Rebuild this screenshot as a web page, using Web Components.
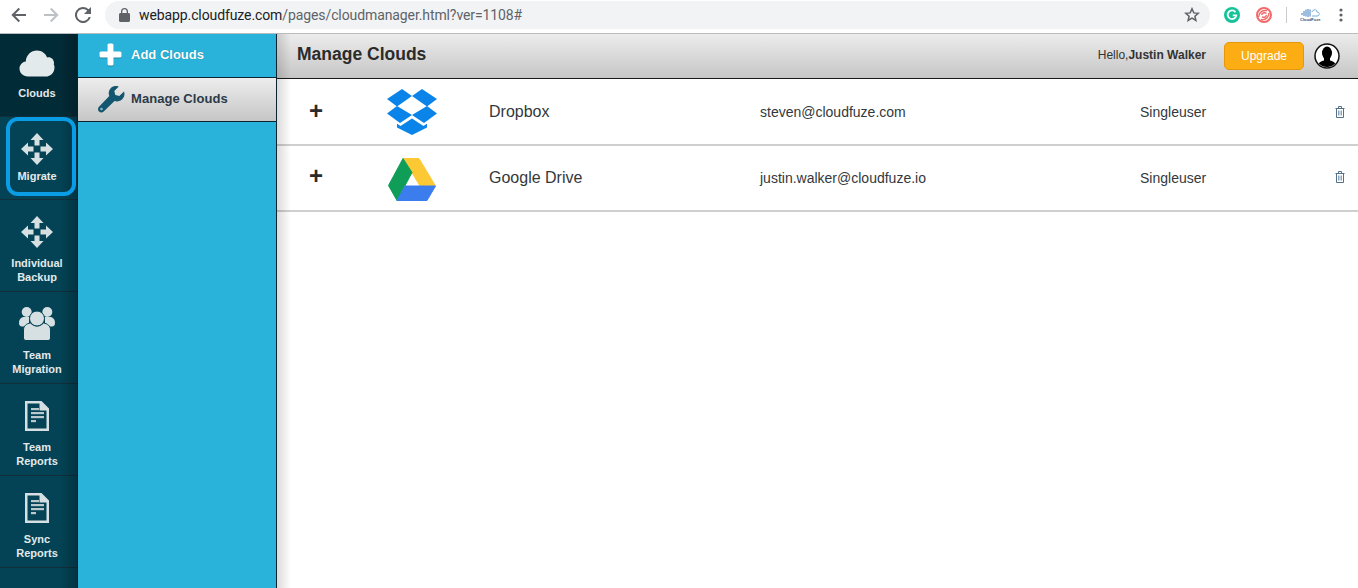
<!DOCTYPE html>
<html><head><meta charset="utf-8"><style>
html,body{margin:0;padding:0;height:100%;overflow:hidden;background:#fff;font-family:"Liberation Sans",Arial,sans-serif}
body{display:flex;flex-direction:column;height:588px}
</style></head><body>
<browser-bar url-host="webapp.cloudfuze.com" url-path="/pages/cloudmanager.html?ver=1108#"></browser-bar>
<app-frame>
  <side-nav slot="nav">
    <nav-item active h="83" pad="16" gap="8" icon="cloud">Clouds</nav-item>
    <nav-item h="83" pad="15" gap="3" icon="move" highlight>Migrate</nav-item>
    <nav-item h="92" pad="15" gap="7" icon="move">Individual<br>Backup</nav-item>
    <nav-item h="92" pad="15" gap="7" icon="team">Team<br>Migration</nav-item>
    <nav-item h="92" pad="17" gap="9" icon="doc">Team<br>Reports</nav-item>
    <nav-item h="92" pad="17" gap="9" icon="doc">Sync<br>Reports</nav-item>
  </side-nav>
  <sub-nav slot="sub">
    <sub-add>Add Clouds</sub-add>
    <sub-manage>Manage Clouds</sub-manage>
  </sub-nav>
  <manage-page slot="main">
    <page-header title="Manage Clouds" user="Justin Walker"></page-header>
    <cloud-row h="65" m="1" pb="0" pm="-1" lm="0" kind="dropbox" name="Dropbox" email="steven@cloudfuze.com" plan="Singleuser"></cloud-row>
    <cloud-row h="64" m="5" pb="2" pm="-3" lm="1" kind="drive" name="Google Drive" email="justin.walker@cloudfuze.io" plan="Singleuser"></cloud-row>
  </manage-page>
</app-frame>
<script>
const ICONS={
cloud:`<svg width="36" height="28" viewBox="0 0 36 28"><path fill="#e3eaec" d="M9 26.500C3.800 26.500 .5 23 .5 18.600c0-3.900 2.700-6.500 6.300-7.200C7.200 5.100 12 .5 18 .5c4.600 0 8.500 2.800 10.100 6.900 .7-.2 1-.2 1.400-.2 3 0 5.500 2.400 5.500 5.700 0 .7-.1 1-.2 1.500 .5 1 .7 1.700 .7 2.800 0 5.500-3.700 9.300-9 9.300z"/></svg>`,
move:`<svg width="34" height="34" viewBox="0 0 34 34"><g fill="#d6dfe2"><path d="M17 1l6.500 7h-4v5.500h-5V8h-4z"/><path d="M17 33l6.500-7h-4v-5.500h-5V26h-4z"/><path d="M1 17l7-6.500v4h5.500v5H8v4z"/><path d="M33 17l-7-6.500v4h-5.500v5H26v4z"/></g></svg>`,
team:`<svg width="36" height="34" viewBox="0 0 36 34"><g fill="#d6dfe2"><circle cx="7.700" cy="5" r="5"/><circle cx="28.300" cy="5" r="5"/><path d="M0 16c0-3.500 2-6 5-6h5v9.500H3c-2 0-3-1.500-3-3.500z"/><path d="M36 16c0-3.500-2-6-5-6h-5v9.500h7c2 0 3-1.500 3-3.500z"/><path stroke="#034355" stroke-width="1" d="M4.500 31V23c0-4 3-6.500 7-7 2 2 4 3 6.500 3s4.500-1 6.500-3c4 .5 7 3 7 7v8c0 1.500-1 2.500-2.500 2.500H7c-1.500 0-2.500-1-2.500-2.500z"/><circle cx="18" cy="11.500" r="7.500" stroke="#034355" stroke-width="1"/></g></svg>`,
doc:`<svg width="24" height="30" viewBox="0 0 24 30"><path fill="#d6dfe2" fill-rule="evenodd" d="M0 0h16.500L24 7.500V30H0zM2.500 2.500v25h19V9.500h-7v-7z"/><path fill="#d6dfe2" d="M16.500 2.500l5 5h-5z" opacity=".7"/><g fill="#b9c8cd"><rect x="6" y="7" width="8" height="2.200"/><rect x="6" y="11" width="13" height="2.200"/><rect x="6" y="15" width="13" height="2.200"/><rect x="6" y="19" width="5" height="2.200"/></g></svg>`,
dropbox:`<svg width="50" height="46" viewBox="0 0 50 46"><g fill="#0b84ea"><path d="M15 0L0 10l10 7.500L25 7z"/><path d="M35 0L50 10l-10 7.500L25 7z"/><path d="M0 24.500L13 34l12-8-15-9z"/><path d="M50 24.500L37 34l-12-8 15-9z"/><path d="M25 29.500l-11.500 7.500-3.500-2.200v3.700l15 7.500 15-7.500v-3.700l-3.500 2.200z"/></g></svg>`,
drive:`<svg width="48" height="43" viewBox="0 0 48 43"><g stroke-linejoin="round" stroke-width="1"><path fill="#fcc934" stroke="#fcc934" d="M15.500 .5h15.500L47.500 28H32z"/><path fill="#0f9d58" stroke="#0f9d58" d="M15 .5L.5 27.500 9 42.500 24 14.500z"/><path fill="#3b7ded" stroke="#3b7ded" d="M17 28h30.500L39 42.500H9z"/></g></svg>`};
function def(name,css,html,init){customElements.define(name,class extends HTMLElement{
  connectedCallback(){if(this.shadowRoot)return;const s=this.attachShadow({mode:'open'});
  const a=n=>this.getAttribute(n)||'';s.innerHTML=`<style>${css}</style>`+html(a,this);if(init)init(s,this)}})}
def('browser-bar',`:host{display:flex;align-items:center;height:33px;flex:none;background:#fff;border-bottom:1px solid #b9bcbe;position:relative}
svg{display:block;flex:none}
.nav{display:flex;align-items:center;gap:0;padding-left:11px;width:105px;box-sizing:border-box}
.nav svg:nth-child(1){margin-right:16px}.nav svg:nth-child(2){margin-right:16px}
.omni{flex:none;width:1105px;height:28px;margin-top:-4px;border-radius:14px;background:#f1f3f4;display:flex;align-items:center;box-sizing:border-box;padding-left:14px;font:14px/28px Roboto,"Liberation Sans",sans-serif;letter-spacing:-.1px}
.omni b{font-weight:400;color:#202124}.omni span{color:#5f6368}
.lock{margin-right:9px}
.star{margin-left:auto;margin-right:10px}
.ext{display:flex;align-items:center;margin-left:14px;margin-top:-4px}
.sep{width:1px;height:16px;background:#c9cbcd;margin:0 13px 0 14px}
.cf{font:bold 4px "Liberation Sans",sans-serif;color:#35506e;text-align:center;width:20px;line-height:4px}
.dots{margin-left:19px}`,(a)=>`
<div class="nav" style="margin-top:-4px">
<svg width="16" height="16" viewBox="0 0 16 16"><path fill="none" stroke="#5f6368" stroke-width="2" d="M15 8H2M8.300 1.500L1.800 8l6.500 6.500"/></svg>
<svg width="16" height="16" viewBox="0 0 16 16"><path fill="none" stroke="#bdc1c6" stroke-width="2" d="M1 8h13M7.700 1.500L14.200 8l-6.500 6.500"/></svg>
<svg width="16" height="16" viewBox="0 0 16 16"><path fill="#5f6368" d="M13.650 2.350A8 8 0 1 0 15.750 10h-2.100A6 6 0 1 1 8 2c1.650 0 3.150.7 4.200 1.800L9 7h7V0z"/></svg>
</div>
<div class="omni">
<svg class="lock" width="11" height="14" viewBox="0 0 11 14"><path fill="#5f6368" d="M9.500 5H9V3.500a3.500 3.500 0 0 0-7 0V5h-.5C.7 5 0 5.700 0 6.500v6C0 13.300.7 14 1.500 14h8c.8 0 1.500-.7 1.500-1.500v-6C11 5.700 10.300 5 9.500 5zM3.300 5V3.500a2.200 2.200 0 0 1 4.400 0V5z"/></svg>
<b>${a('url-host')}</b><span>${a('url-path')}</span>
<svg class="star" width="16" height="15" viewBox="0 0 16 15"><path fill="none" stroke="#5f6368" stroke-width="1.500" d="M8 1.800l1.800 4.100 4.400.4-3.300 2.900 1 4.300L8 11.200l-3.900 2.300 1-4.300L1.800 6.300l4.400-.4z"/></svg>
</div>
<div class="ext">
<svg width="16" height="16" viewBox="0 0 16 16"><circle cx="8" cy="8" r="8" fill="#15c39a"/><path fill="none" stroke="#fff" stroke-width="1.800" d="M11.500 5.200A4.300 4.300 0 1 0 12.300 8.300H8.800"/></svg>
<svg style="margin-left:16px" width="16" height="16" viewBox="0 0 16 16"><circle cx="8" cy="8" r="7" fill="none" stroke="#f26a6a" stroke-width="2"/><path fill="none" stroke="#f26a6a" stroke-width="1.500" d="M2.500 10C3 5 7 3 11 3.500M13 6C13 10 9.500 13.500 5 12.500M5.500 8C6 6 8.500 5 10.500 6.500M10.500 8C10 10 8 11 6 9.800"/></svg>
<div class="sep"></div>
<div class="cf"><svg width="20" height="10" viewBox="0 0 20 10" style="margin:0 auto"><g fill="none" stroke="#3e7fc1"><path d="M2 5v2M4 3v5M6 1.500v7M8 1v8M10 1.500v7"/><path d="M12 8h5c3 0 3-4 0-4 0-3-4-3-5 0" stroke="#6fb0de"/></g></svg>CloudFuze</div>
<svg class="dots" width="4" height="14" viewBox="0 0 4 14"><g fill="#5f6368"><circle cx="2" cy="2" r="1.600"/><circle cx="2" cy="7" r="1.600"/><circle cx="2" cy="12" r="1.600"/></g></svg>
</div>`);
def('app-frame',`:host{display:flex;flex:1;min-height:0}`,()=>`<slot name="nav"></slot><slot name="sub"></slot><slot name="main"></slot>`);
def('side-nav',`:host{display:flex;flex-direction:column;width:77px;flex:none;background:#034355;border-right:1px solid #08212b;position:relative}
:host::after{content:"";position:absolute;top:0;bottom:0;right:0;width:18px;background:linear-gradient(90deg,rgba(0,0,0,0),rgba(0,0,0,.22));pointer-events:none}`,()=>`<slot></slot>`);
def('nav-item',`:host{display:block;box-sizing:border-box;border-bottom:1px solid #102f3b;text-align:center;color:#e3e9eb;font:bold 11px/14px "Liberation Sans",Arial,sans-serif;position:relative;flex:none}
:host([active]){background:#022b38}
.w{display:flex;flex-direction:column;align-items:center;height:100%;box-sizing:border-box;padding-right:3px}
svg{display:block}
.hl{position:absolute;z-index:1;left:6px;top:0;width:70px;height:79px;box-sizing:border-box;border:4px solid #0a9ce5;border-radius:12px}`,(a,el)=>`
<div class="w" style="padding-top:${a('pad')}px;gap:${a('gap')}px">${ICONS[a('icon')]}<div><slot></slot></div></div>${el.hasAttribute('highlight')?'<div class="hl"></div>':''}`,
(s,el)=>{el.style.height=el.getAttribute('h')+'px'});
def('sub-nav',`:host{display:block;width:198px;flex:none;background:#29b3da;border-right:1px solid #0b2430}`,()=>`<slot></slot>`);
def('sub-add',`:host{display:flex;align-items:center;height:43px;padding-left:21px;gap:9px;color:#fff;font:bold 13px "Liberation Sans",Arial,sans-serif;border-bottom:1px solid #0b2430;text-shadow:0 0 1px rgba(0,0,0,.35)}svg{filter:drop-shadow(0 1px 0 rgba(0,0,0,.25));margin-top:-2px}span{margin-top:-2px}`,()=>`<svg width="23" height="23" viewBox="0 0 23 23"><path fill="#fff" d="M8.500 2a1.500 1.500 0 0 1 1.500-1.500h3A1.500 1.500 0 0 1 14.500 2v6.500H21A1.500 1.500 0 0 1 22.500 10v3a1.500 1.500 0 0 1-1.500 1.500h-6.500V21a1.500 1.500 0 0 1-1.500 1.500h-3A1.500 1.500 0 0 1 8.500 21v-6.500H2A1.500 1.500 0 0 1 .5 13v-3A1.500 1.500 0 0 1 2 8.500h6.500z"/></svg><span><slot></slot></span>`);
def('sub-manage',`:host{display:flex;align-items:center;height:43px;padding-left:20px;gap:6px;color:#2b3a48;font:bold 13px "Liberation Sans",Arial,sans-serif;letter-spacing:.05px;border-bottom:1px solid #0b2430;background:linear-gradient(#ededed,#c6c6c6)}span{margin-top:-2px}`,()=>`<svg width="27" height="27" viewBox="0 0 27 27"><path fill="#12566f" d="M26 5.500l-4.700 4.600-4-1.200-1-4 4.500-4.500c-3-1-6.500-.3-8.500 2.300-1.700 2.100-2 5-1 7.300L1 20.800c-1.300 1.300-1.300 3.400 0 4.700s3.400 1.300 4.700 0l10.800-10.600c2.500 1 5.500.5 7.700-1.600 2.200-2.200 2.800-5.300 1.800-7.800z"/><circle cx="3.500" cy="23" r="1.300" fill="#8fb7c6"/></svg><span><slot></slot></span>`);
def('manage-page',`:host{display:block;flex:1;min-width:0;background:#fff;position:relative}
:host::before{content:"";position:absolute;left:0;top:0;bottom:0;width:14px;background:linear-gradient(90deg,rgba(0,0,0,.14),rgba(0,0,0,0));pointer-events:none;z-index:1}`,()=>`<slot></slot>`);
def('page-header',`:host{display:flex;align-items:center;height:44px;box-sizing:content-box;background:linear-gradient(#ececec,#c6c6c6);border-bottom:1px solid #16191b;padding:0 18px 0 20px;color:#2a2a2a}
h1{margin:-4px 0 0;font:bold 17.5px "Liberation Sans",Arial,sans-serif;color:#2b2b2b;flex:1}
.hi{font:12px "Liberation Sans",Arial,sans-serif;color:#333;margin-top:-2px}.hi b{font-weight:bold}
.up{margin-left:18px;width:80px;height:28px;box-sizing:border-box;border:1px solid #e8960c;border-radius:5px;background:#fbad13;color:#fff;font:12px/26px "Liberation Sans",Arial,sans-serif;text-align:center}
svg{margin-left:10px;display:block}`,(a)=>`<h1>${a('title')}</h1><div class="hi">Hello,<b>${a('user')}</b></div><div class="up">Upgrade</div>
<svg width="26" height="26" viewBox="0 0 26 26"><circle cx="13" cy="13" r="12" fill="#fff" stroke="#111" stroke-width="1.500"/><clipPath id="c"><circle cx="13" cy="13" r="11"/></clipPath><g clip-path="url(#c)" fill="#000"><ellipse cx="13" cy="10" rx="5" ry="6.500"/><path d="M3 25c0-5 4-6.500 7-7.500v-3h6v3c3 1 7 2.500 7 7.500v1H3z"/></g></svg>`);
def('cloud-row',`:host{display:block;border-bottom:2px solid #cfcfcf;position:relative}
.g{display:grid;grid-template-columns:212px 271px 380px 1fr 10px;align-items:center;height:100%;box-sizing:border-box;padding-right:13px;color:#333;font-family:"Liberation Sans",Arial,sans-serif}
.i{display:flex;align-items:center}
.p{font:bold 24px/1 "Liberation Sans",sans-serif;color:#2b2b2b;width:110px;display:block;padding-left:32px;box-sizing:border-box}
.logo{display:block}
.n{font-size:16px;color:#33383c;margin-top:1px}.e,.pl{font-size:14px;color:#33383c;margin-top:1px}
svg{display:block}`,(a)=>`<div class="g" style="padding-bottom:${a('pb')}px"><div class="i"><span class="p" style="margin-top:${a('pm')}px">+</span><span class="logo" style="margin-top:${a('m')}px;margin-left:${a('lm')}px">${ICONS[a('kind')]}</span></div><div class="n">${a('name')}</div><div class="e">${a('email')}</div><div class="pl">${a('plan')}</div>
<svg width="10" height="12" viewBox="0 0 10 12"><path fill="none" stroke="#53708a" d="M.5 2.500h9M3.500 2.500v-2h3v2M1.500 2.500v9h7v-9"/><path fill="none" stroke="#8fa6b8" d="M3.500 4.500v5M5 4.500v5M6.500 4.500v5"/></svg></div>`,
(s,el)=>{el.style.height=el.getAttribute('h')+'px'});
</script>
</body></html>
